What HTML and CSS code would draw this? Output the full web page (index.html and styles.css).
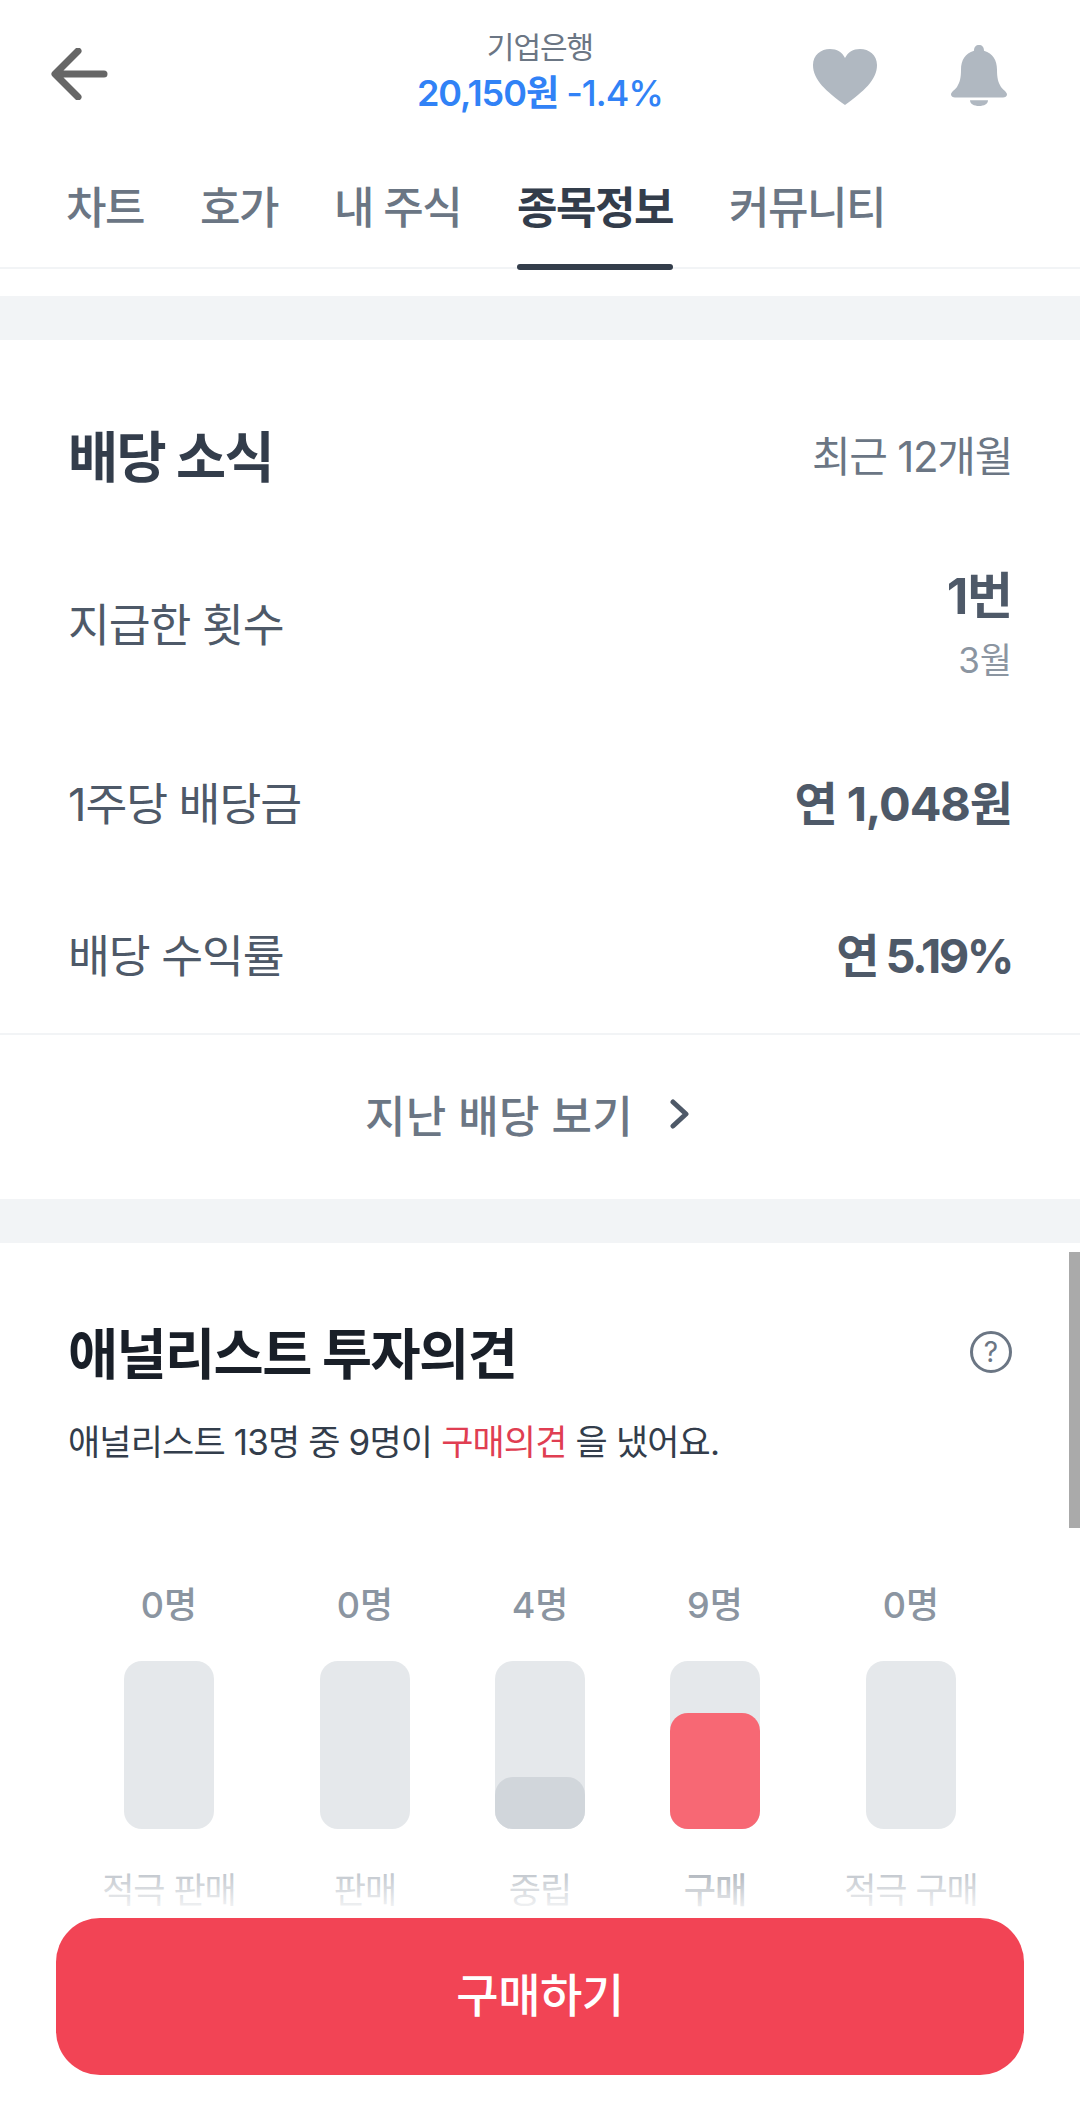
FILE: index.html
```html
<!DOCTYPE html>
<html lang="ko">
  <head>
    <meta charset="utf-8" />
    <title>기업은행</title>
    <link rel="stylesheet" href="styles.css">
  </head>

  <body>
    <!-- 상단 헤더 -->
    <div class="top-bar">
      <svg class="back-icon" width="60" height="52" viewBox="0 0 60 52">
        <path d="M54 26H6M28 3L5 26l23 23" fill="none" stroke="#666" stroke-width="7" stroke-linecap="round" stroke-linejoin="round" />
      </svg>
      <div class="top-title">
        <div class="stock-name">기업은행</div>
        <div class="stock-price">20,150원 <span class="stock-rate">-1.4%</span></div>
      </div>
      <svg class="heart-icon" width="66" height="58" viewBox="0 0 66 58">
        <path d="M33 57C14 43 1 32 1 17 1 7 9 1 18 1c7 0 12 3 15 9 3-6 8-9 15-9 9 0 17 6 17 16 0 15-13 26-32 40z" fill="#b0b8c1" />
      </svg>
      <svg class="bell-icon" width="58" height="61" viewBox="0 0 58 64" preserveAspectRatio="none">
        <path d="M29 0c3 0 5 2 5 6 9 3 13 10 13 20 0 8 1 13 4 18 2 3 6 5 6 8 0 2-2 3-4 3H5c-2 0-4-1-4-3 0-3 4-5 6-8 3-5 4-10 4-18 0-10 4-17 13-20 0-4 2-6 5-6z" fill="#b0b8c1" />
        <path d="M20 58h18c0 4-4 6-9 6s-9-2-9-6z" fill="#b0b8c1" />
      </svg>
    </div>

    <!-- 탭 -->
    <div class="tabs">
      <div class="tab">차트</div>
      <div class="tab">호가</div>
      <div class="tab">내 주식</div>
      <div class="tab active">종목정보</div>
      <div class="tab">커뮤니티</div>
    </div>

    <div class="gap-top"></div>
    <div class="band"></div>

    <!-- 배당 소식 -->
    <div class="section dividend">
      <div class="section-head">
        <h2 class="dividend-title">배당 소식</h2>
        <span class="muted">최근 12개월</span>
      </div>
      <div class="row row-first">
        <span class="row-label">지급한 횟수</span>
        <div class="row-right">
          <div class="row-value">1번</div>
          <div class="row-sub">3월</div>
        </div>
      </div>
      <div class="row row-second">
        <span class="row-label">1주당 배당금</span>
        <span class="row-value">연 1,048원</span>
      </div>
      <div class="row row-third">
        <span class="row-label">배당 수익률</span>
        <span class="row-value">연 5.19%</span>
      </div>
    </div>
    <div class="more-link">
      <span>지난 배당 보기</span>
      <svg width="22" height="30" viewBox="0 0 22 30">
        <path d="M4 3l13 12L4 27" fill="none" stroke="#4e5968" stroke-width="5" stroke-linecap="round" stroke-linejoin="round" />
      </svg>
    </div>
    <div class="band"></div>

    <!-- 애널리스트 투자의견 -->
    <div class="section analyst">
      <div class="analyst-head">
        <h2 class="analyst-title">애널리스트 투자의견</h2>
        <svg class="help-icon" width="42" height="42" viewBox="0 0 42 42">
          <circle cx="21" cy="21" r="19.5" fill="none" stroke="#6b7684" stroke-width="3" />
          <text x="21" y="31" text-anchor="middle" class="help-mark">?</text>
        </svg>
      </div>
      <p class="analyst-desc">애널리스트 13명 중 9명이 <span class="red">구매의견</span> 을 냈어요.</p>
    </div>

    <div class="chart">
      <div class="col">
        <div class="col-count">0명</div>
        <div class="bar"></div>
        <div class="col-label">적극 판매</div>
      </div>
      <div class="col">
        <div class="col-count">0명</div>
        <div class="bar"></div>
        <div class="col-label">판매</div>
      </div>
      <div class="col">
        <div class="col-count">4명</div>
        <div class="bar"><div class="bar-fill" style="height: 31%"></div></div>
        <div class="col-label">중립</div>
      </div>
      <div class="col">
        <div class="col-count">9명</div>
        <div class="bar"><div class="bar-fill buy" style="height: 69%"></div></div>
        <div class="col-label strong">구매</div>
      </div>
      <div class="col">
        <div class="col-count">0명</div>
        <div class="bar"></div>
        <div class="col-label">적극 구매</div>
      </div>
    </div>

    <!-- 스크롤바, 하단 버튼 -->
    <div class="scroll-thumb"></div>
    <div class="bottom-cta">
      <div class="fade"></div>
      <div class="cta-wrap">
        <button class="buy-btn">구매하기</button>
      </div>
    </div>
  </body>
</html>
```

FILE: styles.css
```css
* {
  box-sizing: border-box;
}

body {
  margin: 0;
  height: 2120px;
  overflow: hidden;
  position: relative;
  background: #fff;
  font-family: "Inter", "Noto Sans CJK KR", sans-serif;
  color: #333d4b;
}

/* 상단 헤더 */
.top-bar {
  height: 148px;
  padding: 0 72px 0 50px;
  display: flex;
  align-items: center;
  position: relative;
}

.back-icon {
  margin-right: auto;
}

.heart-icon {
  margin-right: 72px;
  margin-top: 6px;
}

.bell-icon {
  margin-top: 2px;
}

.top-title {
  position: absolute;
  left: 0;
  right: 0;
  top: 27px;
  text-align: center;
}

.stock-name {
  font-size: 30px;
  line-height: 40px;
  color: #6b7684;
  letter-spacing: -1px;
}

.stock-price {
  font-size: 36px;
  line-height: 53px;
  font-weight: 600;
  color: #3182f6;
  letter-spacing: -1px;
}

.stock-rate {
  font-weight: 500;
}

/* 탭 */
.tabs {
  height: 121px;
  padding: 0 0 0 66px;
  display: flex;
  gap: 56px;
  border-bottom: 2px solid #f2f4f6;
}

.tab {
  font-size: 44px;
  line-height: 120px;
  font-weight: 500;
  color: #6b7684;
  letter-spacing: -1.5px;
  position: relative;
}

.tab.active {
  color: #333d4b;
  font-weight: 700;
}

.tab.active::after {
  content: "";
  position: absolute;
  left: 0;
  right: 0;
  bottom: -3px;
  height: 6px;
  border-radius: 3px;
  background: #333d4b;
}

.gap-top {
  height: 27px;
}

.band {
  height: 44px;
  background: #f2f4f6;
}

/* 공통 */
.section {
  padding: 0 68px;
}

h2 {
  margin: 0;
}

.section-head {
  display: flex;
  justify-content: space-between;
  align-items: center;
  padding-top: 78px;
  height: 148px;
}

.dividend-title {
  font-size: 54.5px;
  font-weight: 700;
  color: #333d4b;
  letter-spacing: -1.7px;
}

.muted {
  font-size: 42px;
  color: #6b7684;
  letter-spacing: -1.3px;
}

.row {
  display: flex;
  justify-content: space-between;
  align-items: center;
}

.row-first {
  margin-top: 78px;
  height: 128px;
}

.row-first .row-label {
  padding-bottom: 16px;
}

.row-second {
  margin-top: 77px;
  height: 60px;
}

.row-third {
  margin-top: 92px;
  height: 60px;
}

.row-label {
  font-size: 45.5px;
  color: #4e5968;
  letter-spacing: -1.1px;
}

.row-right {
  text-align: right;
}

.row-value {
  font-size: 47px;
  font-weight: 700;
  color: #4e5968;
  letter-spacing: -1.1px;
  padding-bottom: 2px;
}

.row-third .row-value {
  letter-spacing: -2.5px;
}

.row-first .row-value {
  line-height: 60px;
  font-size: 50px;
  padding-bottom: 0;
}

.row-sub {
  font-size: 35px;
  line-height: 68px;
  color: #8b95a1;
}

.dividend {
  height: 693px;
}

.more-link {
  height: 166px;
  border-top: 2px solid #f2f4f6;
  padding: 0 24px 6px 0;
  display: flex;
  justify-content: center;
  align-items: center;
  gap: 36px;
  font-size: 44px;
  font-weight: 500;
  color: #6b7684;
  letter-spacing: 0.2px;
}

/* 애널리스트 */
.analyst-head {
  display: flex;
  justify-content: space-between;
  align-items: center;
  padding-top: 80px;
  height: 134px;
}

.analyst-title {
  font-size: 54.5px;
  font-weight: 700;
  color: #191f28;
  letter-spacing: -1.6px;
}

.help-icon {
  margin-top: 3px;
}

.help-mark {
  font-family: "Inter", sans-serif;
  font-size: 28px;
  font-weight: 400;
  fill: #6b7684;
}

.analyst-desc {
  margin: 41px 0 0;
  font-size: 35px;
  line-height: 48px;
  color: #333d4b;
  letter-spacing: -0.85px;
}

.red {
  color: #e03e52;
}

.chart {
  margin-top: 114px;
  padding-left: 124px;
  display: flex;
  gap: 85px;
}

.col {
  width: 90px;
  display: flex;
  flex-direction: column;
  align-items: center;
}

.col:nth-child(1),
.col:nth-child(4) {
  margin-right: 21px;
}

.col-count {
  font-size: 36px;
  line-height: 50px;
  font-weight: 500;
  color: #8b95a1;
  white-space: nowrap;
}

.bar {
  margin-top: 31px;
  width: 90px;
  height: 168px;
  border-radius: 18px;
  background: #e5e8eb;
  display: flex;
  align-items: flex-end;
}

.bar-fill {
  width: 100%;
  border-radius: 18px;
  background: #d1d6db;
}

.bar-fill.buy {
  background: #f76874;
}

.col-label {
  margin-top: 36px;
  font-size: 35px;
  line-height: 50px;
  color: #8b95a1;
  white-space: nowrap;
  letter-spacing: -1px;
}

.col-label.strong {
  font-weight: 500;
  color: #6b7684;
}

.scroll-thumb {
  position: absolute;
  right: 0;
  top: 1252px;
  width: 11px;
  height: 276px;
  background: #aaa;
}

/* 하단 고정 버튼 */
.bottom-cta {
  position: absolute;
  left: 0;
  right: 0;
  bottom: 0;
}

.fade {
  height: 56px;
  background: linear-gradient(rgba(255, 255, 255, 0.35), #fff);
}

.cta-wrap {
  height: 202px;
  padding: 0 56px;
  background: #fff;
}

.buy-btn {
  display: block;
  width: 100%;
  height: 157px;
  border: 0;
  border-radius: 44px;
  padding-bottom: 10px;
  background: #f24455;
  color: #fff;
  font-family: inherit;
  font-size: 46px;
  font-weight: 500;
  letter-spacing: -0.5px;
}
```
